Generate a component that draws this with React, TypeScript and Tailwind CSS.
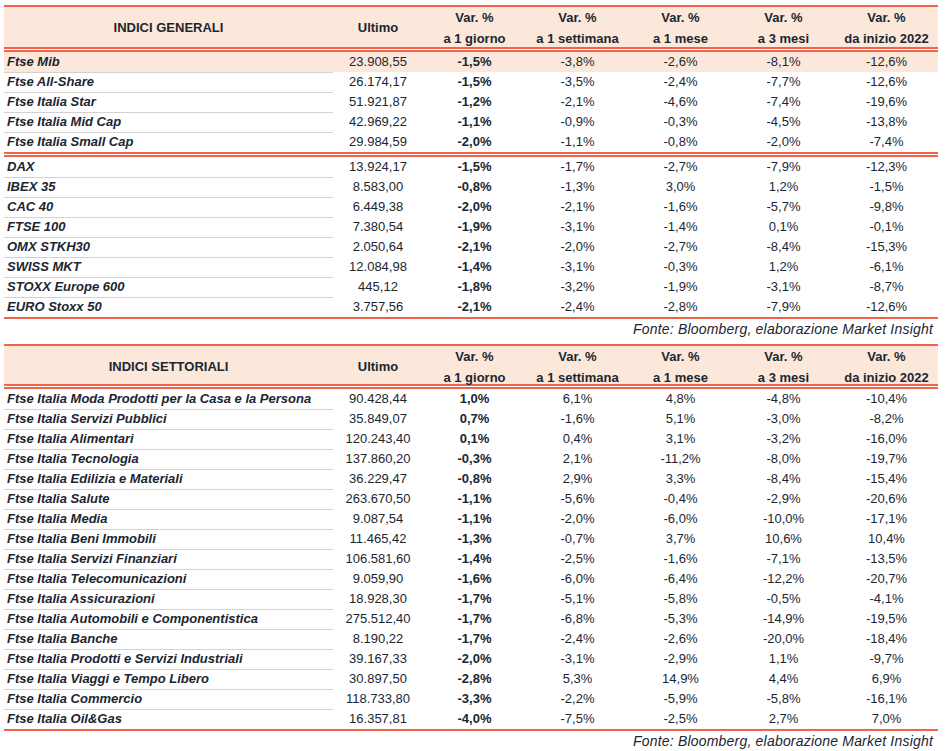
import React from 'react';

type Row = [string, string, string, string, string, string, string];

const RED = 'border-[#f1634a]';
const COLS = 'grid grid-cols-[329px_90px_103px_103px_103px_103px_103px]';

// Indici generali: Italia + Europa
const GENERALI: Row[][] = [
  [
    ['Ftse Mib', '23.908,55', '-1,5%', '-3,8%', '-2,6%', '-8,1%', '-12,6%'],
    ['Ftse All-Share', '26.174,17', '-1,5%', '-3,5%', '-2,4%', '-7,7%', '-12,6%'],
    ['Ftse Italia Star', '51.921,87', '-1,2%', '-2,1%', '-4,6%', '-7,4%', '-19,6%'],
    ['Ftse Italia Mid Cap', '42.969,22', '-1,1%', '-0,9%', '-0,3%', '-4,5%', '-13,8%'],
    ['Ftse Italia Small Cap', '29.984,59', '-2,0%', '-1,1%', '-0,8%', '-2,0%', '-7,4%'],
  ],
  [
    ['DAX', '13.924,17', '-1,5%', '-1,7%', '-2,7%', '-7,9%', '-12,3%'],
    ['IBEX 35', '8.583,00', '-0,8%', '-1,3%', '3,0%', '1,2%', '-1,5%'],
    ['CAC 40', '6.449,38', '-2,0%', '-2,1%', '-1,6%', '-5,7%', '-9,8%'],
    ['FTSE 100', '7.380,54', '-1,9%', '-3,1%', '-1,4%', '0,1%', '-0,1%'],
    ['OMX STKH30', '2.050,64', '-2,1%', '-2,0%', '-2,7%', '-8,4%', '-15,3%'],
    ['SWISS MKT', '12.084,98', '-1,4%', '-3,1%', '-0,3%', '1,2%', '-6,1%'],
    ['STOXX Europe 600', '445,12', '-1,8%', '-3,2%', '-1,9%', '-3,1%', '-8,7%'],
    ['EURO Stoxx 50', '3.757,56', '-2,1%', '-2,4%', '-2,8%', '-7,9%', '-12,6%'],
  ],
];

const SETTORIALI: Row[][] = [
  [
    ['Ftse Italia Moda Prodotti per la Casa e la Persona', '90.428,44', '1,0%', '6,1%', '4,8%', '-4,8%', '-10,4%'],
    ['Ftse Italia Servizi Pubblici', '35.849,07', '0,7%', '-1,6%', '5,1%', '-3,0%', '-8,2%'],
    ['Ftse Italia Alimentari', '120.243,40', '0,1%', '0,4%', '3,1%', '-3,2%', '-16,0%'],
    ['Ftse Italia Tecnologia', '137.860,20', '-0,3%', '2,1%', '-11,2%', '-8,0%', '-19,7%'],
    ['Ftse Italia Edilizia e Materiali', '36.229,47', '-0,8%', '2,9%', '3,3%', '-8,4%', '-15,4%'],
    ['Ftse Italia Salute', '263.670,50', '-1,1%', '-5,6%', '-0,4%', '-2,9%', '-20,6%'],
    ['Ftse Italia Media', '9.087,54', '-1,1%', '-2,0%', '-6,0%', '-10,0%', '-17,1%'],
    ['Ftse Italia Beni Immobili', '11.465,42', '-1,3%', '-0,7%', '3,7%', '10,6%', '10,4%'],
    ['Ftse Italia Servizi Finanziari', '106.581,60', '-1,4%', '-2,5%', '-1,6%', '-7,1%', '-13,5%'],
    ['Ftse Italia Telecomunicazioni', '9.059,90', '-1,6%', '-6,0%', '-6,4%', '-12,2%', '-20,7%'],
    ['Ftse Italia Assicurazioni', '18.928,30', '-1,7%', '-5,1%', '-5,8%', '-0,5%', '-4,1%'],
    ['Ftse Italia Automobili e Componentistica', '275.512,40', '-1,7%', '-6,8%', '-5,3%', '-14,9%', '-19,5%'],
    ['Ftse Italia Banche', '8.190,22', '-1,7%', '-2,4%', '-2,6%', '-20,0%', '-18,4%'],
    ['Ftse Italia Prodotti e Servizi Industriali', '39.167,33', '-2,0%', '-3,1%', '-2,9%', '1,1%', '-9,7%'],
    ['Ftse Italia Viaggi e Tempo Libero', '30.897,50', '-2,8%', '5,3%', '14,9%', '4,4%', '6,9%'],
    ['Ftse Italia Commercio', '118.733,80', '-3,3%', '-2,2%', '-5,9%', '-5,8%', '-16,1%'],
    ['Ftse Italia Oil&Gas', '16.357,81', '-4,0%', '-7,5%', '-2,5%', '2,7%', '7,0%'],
  ],
];

const SUBS = ['a 1 giorno', 'a 1 settimana', 'a 1 mese', 'a 3 mesi', 'da inizio 2022'];

function DoubleLine() {
  return <div className={`h-[5px] border-t-2 border-b-2 ${RED}`} />;
}

function Header({ title, tall }: { title: string; tall: boolean }) {
  return (
    <div className={`${COLS} bg-[#fce8da] font-bold text-[13px] ${tall ? 'h-[40px]' : 'h-[38px]'}`}>
      <div className="flex items-center justify-center">{title}</div>
      <div className="flex items-center justify-center">Ultimo</div>
      {SUBS.map((s) => (
        <div key={s} className="flex flex-col items-center justify-center leading-[21px]">
          <span>Var. %</span>
          <span>{s}</span>
        </div>
      ))}
    </div>
  );
}

function DataRow({ row, last, highlight }: { row: Row; last: boolean; highlight: boolean }) {
  return (
    <div className={`${COLS} h-[20px] leading-[20px] text-[13px] ${highlight ? 'bg-[#fce8da]' : ''}`}>
      <div className={`pl-[3px] font-bold italic whitespace-nowrap ${last ? '' : 'border-b border-[#d2d2d2]'}`}>
        {row[0]}
      </div>
      {row.slice(1).map((v, i) => (
        <div key={i} className={`text-center ${i === 1 ? 'font-bold' : ''}`}>
          {v}
        </div>
      ))}
    </div>
  );
}

function IndexTable({ title, groups, tall }: { title: string; groups: Row[][]; tall: boolean }) {
  return (
    <div className={`border-t-2 ${RED}`}>
      <Header title={title} tall={tall} />
      <DoubleLine />
      {groups.map((g, gi) => (
        <div key={gi}>
          {g.map((r, ri) => (
            <DataRow
              key={r[0]}
              row={r}
              last={ri === g.length - 1}
              highlight={r[0] === 'Ftse Mib'}
            />
          ))}
          {gi < groups.length - 1 ? <DoubleLine /> : <div className={`border-t-2 ${RED}`} />}
        </div>
      ))}
    </div>
  );
}

function Fonte() {
  return (
    <div className="h-[20px] leading-[20px] pr-[5px] text-right italic text-[14px] tracking-[0.2px]">
      Fonte: Bloomberg, elaborazione Market Insight
    </div>
  );
}

export default function App() {
  return (
    <div
      className="w-[946px] h-[751px] bg-white pl-[4px] pt-[5px] text-[#1b2631] overflow-hidden"
      style={{ fontFamily: '"Liberation Sans", Arial, sans-serif' }}
    >
      <div className="w-[934px]">
        <IndexTable title="INDICI GENERALI" groups={GENERALI} tall />
        <Fonte />
        <div className="h-[5px]" />
        <IndexTable title="INDICI SETTORIALI" groups={SETTORIALI} tall={false} />
        <Fonte />
      </div>
    </div>
  );
}
